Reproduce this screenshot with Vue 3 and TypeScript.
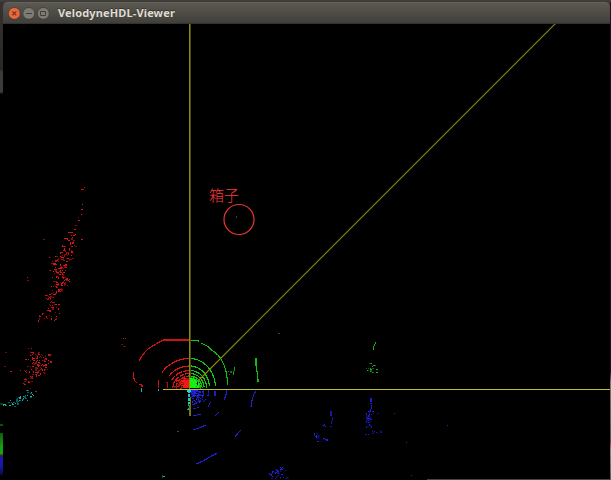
<script setup lang="ts">
interface Stroke { color: string; points: string; dash?: string }
interface Ring { color: string; d: string; dash?: string }
type Band = [y: number, x1: number, x2: number, count: number]
interface Cloud { color: string; dim: string; bands: Band[] }

const CX = 190
const CY = 388

const quarter = (rx: number, ry: number, side: 1 | -1, end: number): string => {
  const pts: string[] = []
  for (let i = 0; i <= 24; i++) {
    const a = (end * i) / 24
    pts.push(`${(CX + side * rx * Math.sin(a)).toFixed(1)},${(CY - ry * Math.cos(a)).toFixed(1)}`)
  }
  return 'M' + pts.join('L')
}

const ring = (rx: number, ry: number, side: 1 | -1, end: number, dash?: string): Ring => ({
  color: side === 1 ? '#10cc10' : '#dc1414', d: quarter(rx, ry, side, end), dash,
})

const rings: Ring[] = [
  ring(33, 29.5, -1, 1.02), ring(25, 22, -1, 1.0), ring(20.5, 17.5, -1, 1.1, '7 1'),
  ring(17, 14.5, -1, 1.25, '5 1'), ring(14, 12, -1, 1.4, '4 1'), ring(12, 10, -1, 1.5, '4 1'),
  ring(25.5, 29.5, 1, 1.5), ring(19.5, 22, 1, 1.5), ring(16.5, 17.5, 1, 1.55),
  ring(14, 14.5, 1, 1.5), ring(12, 12, 1, 1.5), ring(10.5, 10, 1, 1.5),
]

const strokes: Stroke[] = [
  { color: '#c81414', points: '190,340 163,340 156,344 148,349 145,352 142,356 139,361' },
  { color: '#c81414', points: '134,372 133,376 135,381 137,383' },
  { color: '#c81414', points: '139,384 142,385 142,387' },
  { color: '#c81414', points: '158,380 159,384 158,388' },
  { color: '#a81010', points: '167,382 168,388' },
  { color: '#c81414', points: '173,382 174,385 172,388' },
  { color: '#e01414', points: '177,380 176,387', dash: '2 1' },
  { color: '#10d010', points: '190,340 199,341' },
  { color: '#10c010', points: '201,343 207,346 213,351 218,355 221,359 224,365 226,371 227,377 228,385' },
  { color: '#10c010', points: '256,358 256,365 257,371 258,379 258,382' },
  { color: '#10a010', points: '235,367 234,371 233,375' },
  { color: '#0c780c', points: '228,372 230,370 232,373', dash: '2 2' },
  { color: '#0c780c', points: '229,375 231,371', dash: '1 1' },
  { color: '#18b018', points: '376,342 374,346 373,350' },
  { color: '#2020d0', points: '196,464 203,461 210,457 217,453' },
  { color: '#2020d0', points: '193,430 199,428 206,425' },
  { color: '#2020d0', points: '193,416 197,415 201,414' },
  { color: '#2020d0', points: '215,416 217,414 219,412' },
  { color: '#2020d0', points: '235,437 238,433 241,430' },
  { color: '#2020c0', points: '251,407 252,400 254,394 256,391' },
  { color: '#2020c0', points: '224,400 226,395 227,390' },
  { color: '#2020c0', points: '215,391 215,396' },
  { color: '#2020c0', points: '208,407 210,403 211,402' },
  { color: '#2020c0', points: '203,402 206,399' },
  { color: '#2020c0', points: '193,409 199,407', dash: '3 1' },
  { color: '#2020c0', points: '192,405 197,403' },
  { color: '#2020c0', points: '209,390 208,396', dash: '3 1' },
  { color: '#2020c0', points: '204,390 203,396' },
  { color: '#1cc8c8', points: '189,390 189,404', dash: '3 1' },
  { color: '#10a0a0', points: '189,404 188,410', dash: '2 2' },
  { color: '#18b0b0', points: '142,388 141,392' },
  { color: '#18b0b0', points: '158,389 159,391' },
  { color: '#2020c8', points: '371,398 371,404', dash: '4 1' },
  { color: '#2020c8', points: '372,405 371,409 369,415 367,419' },
  { color: '#1818a0', points: '331,411 331,416' },
  { color: '#1818a0', points: '333,417 332,421 331,424' },
]

const clouds: Cloud[] = [
  { color: '#d81414', dim: '#800c0c', bands: [
    [187, 83, 86, 2], [189, 81, 83, 3], [204, 81, 83, 1], [209, 81, 82, 1], [214, 81, 82, 1],
    [217, 78, 79, 1], [220, 78, 79, 2], [225, 75, 77, 2], [229, 60, 76, 2], [232, 64, 76, 3],
    [234, 70, 77, 5], [237, 60, 77, 5], [239, 43, 44, 1], [239, 80, 82, 1], [240, 66, 77, 4],
    [242, 68, 76, 6], [245, 62, 77, 7],
    [248, 62, 71, 5], [250, 61, 77, 7], [252, 60, 75, 8], [254, 61, 73, 8], [256, 47, 75, 8],
    [258, 55, 76, 11], [260, 50, 74, 8], [263, 46, 67, 7], [265, 59, 70, 9], [267, 52, 67, 10],
    [269, 48, 68, 12], [271, 48, 66, 8], [273, 49, 65, 7], [276, 50, 68, 8], [278, 60, 70, 7],
    [280, 50, 70, 7], [282, 55, 67, 9], [284, 53, 68, 10], [286, 50, 62, 6], [288, 56, 64, 6],
    [290, 51, 65, 8], [292, 51, 58, 6], [294, 38, 56, 6], [296, 46, 53, 7], [298, 42, 53, 6],
    [301, 48, 54, 5], [304, 49, 59, 6], [307, 46, 60, 6], [310, 47, 53, 5], [312, 40, 60, 5],
    [315, 38, 57, 6], [318, 38, 58, 7], [320, 38, 56, 4],
    [277, 27, 29, 1], [280, 26, 28, 2],
  ] },
  { color: '#c81818', dim: '#700d0d', bands: [
    [348, 28, 35, 2], [352, 28, 40, 6], [354, 29, 52, 11], [356, 32, 51, 10], [358, 17, 50, 10],
    [360, 29, 52, 11], [362, 29, 50, 11], [364, 31, 46, 12], [366, 27, 48, 11], [368, 25, 50, 11],
    [370, 20, 43, 9], [372, 25, 45, 9], [374, 30, 39, 7], [376, 28, 38, 6], [378, 24, 41, 7],
    [380, 23, 34, 6], [383, 21, 26, 4], [388, 28, 31, 1], [391, 34, 36, 2],
    [352, 5, 7, 1], [366, 4, 5, 1], [371, 10, 11, 1],
    [338, 123, 126, 2], [344, 121, 123, 1], [346, 123, 127, 3],
  ] },
  { color: '#18b0b0', dim: '#0a6060', bands: [
    [390, 26, 29, 3], [392, 25, 34, 5], [394, 19, 34, 6], [396, 15, 31, 7], [398, 14, 27, 9],
    [400, 10, 29, 8], [402, 8, 18, 7], [404, 3, 13, 8], [406, 11, 16, 3],
    [431, 177, 179, 3], [475, 162, 165, 4],
  ] },
  { color: '#18b018', dim: '#0a600a', bands: [
    [333, 277, 279, 1], [363, 369, 373, 3], [365, 370, 378, 4], [368, 366, 377, 6],
    [370, 366, 371, 6], [372, 369, 378, 3], [216, 236, 237, 1], [217, 236, 237, 1],
  ] },
  { color: '#2020e0', dim: '#101070', bands: [
    [411, 368, 373, 5], [413, 366, 374, 7], [415, 366, 370, 9], [417, 365, 373, 9],
    [419, 365, 371, 7], [421, 366, 371, 7], [424, 367, 372, 5], [426, 366, 375, 5],
    [430, 370, 381, 4], [432, 366, 380, 4], [434, 365, 370, 3], [413, 377, 378, 1], [413, 394, 395, 1],
    [424, 322, 327, 5], [426, 321, 333, 3], [433, 314, 319, 5], [435, 314, 319, 8],
    [438, 315, 330, 6], [441, 317, 324, 3], [425, 447, 449, 1], [442, 406, 407, 2], [475, 411, 412, 1],
    [467, 278, 284, 4], [469, 274, 286, 10], [471, 269, 286, 11], [473, 268, 284, 10],
    [475, 271, 279, 7], [477, 271, 290, 8], [478, 273, 295, 6],
  ] },
  { color: '#2626f0', dim: '#1818a0', bands: [
    [390, 190, 200, 14], [391, 190, 203, 14], [393, 190, 201, 14], [395, 191, 203, 13],
    [397, 191, 203, 10], [399, 192, 203, 8], [401, 192, 206, 6],
  ] },
  { color: '#f01818', dim: '#a01010', bands: [
    [378, 182, 189, 6], [380, 180, 186, 6], [382, 178, 184, 7], [384, 176, 184, 8],
    [386, 173, 184, 10], [388, 175, 186, 8],
  ] },
  { color: '#14e814', dim: '#10a010', bands: [
    [377, 191, 197, 6], [380, 194, 200, 6], [383, 196, 201, 6], [386, 196, 203, 7],
  ] },
]

let seed = 7193
const random = (): number => {
  seed = (seed * 48271) % 2147483647
  return seed / 2147483647
}

// Half of the returns gather toward the middle of their band, the rest spread evenly.
const spread = (): number => (random() > 0.5 ? random() : (random() + random()) / 2)

const dots = clouds.flatMap((cloud) =>
  cloud.bands.flatMap(([y, x1, x2, count]) =>
    Array.from({ length: count }, () => ({
      x: Math.floor(x1 + spread() * (x2 - x1)),
      y: y + (count > 3 ? Math.floor(random() * 2) : 0),
      width: random() > 0.7 ? 2 : 1,
      height: random() > 0.85 && count > 3 ? 2 : 1,
      color: random() > 0.45 ? cloud.color : cloud.dim,
    })),
  ),
)
</script>

<template>
  <div class="desktop">
    <div class="behind-left"></div>
    <main class="window">
      <header class="titlebar">
        <svg class="controls" viewBox="0 0 44 14" aria-hidden="true">
          <circle cx="7.3" cy="7.4" r="5.9" fill="#e9683f" stroke="#34322e" stroke-width=".6" />
          <path d="M5.3 5.4l4 4M9.3 5.4l-4 4" stroke="#70301c" stroke-width="1.1" />
          <circle cx="21.8" cy="7.4" r="5.9" fill="#7d7b73" stroke="#34322e" stroke-width=".6" />
          <path d="M19 7.5h6" stroke="#403f3a" />
          <circle cx="36.3" cy="7.4" r="5.9" fill="#7d7b73" stroke="#34322e" stroke-width=".6" />
          <path d="M33.5 5.5h5v4h-5z" fill="none" stroke="#403f3a" />
        </svg>
        <h1>VelodyneHDL-Viewer</h1>
      </header>
      <svg class="scene" viewBox="3 24 607 455" shape-rendering="crispEdges">
        <g class="trace">
          <path v-for="(r, i) in rings" :key="i" :d="r.d" :stroke="r.color" :stroke-dasharray="r.dash" />
        </g>
        <path d="M183 388l-1-4 2-4 3-2h3v10z" fill="#f51818" />
        <path d="M190 388v-10l4 1 3 3 1 6z" fill="#14f014" />
        <path d="M190 390h7l-2 5-2 2-3-5z" fill="#2222e0" />
        <g class="trace">
          <polyline
            v-for="(s, i) in strokes" :key="i" :points="s.points"
            :stroke="s.color" :stroke-dasharray="s.dash"
          />
        </g>
        <rect
          v-for="(d, i) in dots" :key="i" :x="d.x" :y="d.y"
          :width="d.width" :height="d.height" :fill="d.color"
        />
        <path d="M189.5 24v366" stroke="#8c8c10" />
        <path d="M190.5 24v354" stroke="#4c4a08" />
        <path d="M189.5 405v11M190.5 397v19" stroke="#77751a" />
        <path d="M198 381L555.5 23.5" stroke="#8e8e10" stroke-width="1.1" shape-rendering="auto" />
        <path d="M163 389.5h447" stroke="#c0c028" />
        <path d="M187 390h4v2h-4z" fill="#20d8e0" />
        <circle cx="239" cy="219.5" r="15" fill="none" stroke="#ee3434" stroke-width="1.2" shape-rendering="auto" />
        <text class="label" x="209" y="201">箱子</text>
      </svg>
    </main>
    <div class="behind-right"></div>
  </div>
</template>

<style>
body { margin: 0; background: #000; overflow: hidden; }
</style>

<style scoped>
.desktop {
  box-sizing: border-box;
  width: 611px;
  height: 480px;
  display: grid;
  grid-template-columns: 3px 607px 1px;
  padding-top: 2px;
  background: linear-gradient(90deg, #000 427px, #454345 427px) 0 479px / 100% 1px no-repeat,
    linear-gradient(#403f3b, #35342f) 0 0 / 100% 5px no-repeat, #000;
}
.behind-left {
  background: linear-gradient(transparent 401px, #073f07 401px 403px, transparent 403px 422px,
    #0a500a 422px 424px, transparent 424px 431px, #0a600a 431px, #16a016 445px 452px,
    #502808 453px, #1818a8 455px 464px, #080850 472px, transparent 474px),
    linear-gradient(#34332f, #292825 68px, #3c3b37 69px 90px, #000 92px);
}
.window {
  display: flex;
  flex-direction: column;
  min-width: 0;
  height: 477px;
}
.titlebar {
  box-sizing: border-box;
  height: 22px;
  display: flex;
  align-items: center;
  padding-left: 4px;
  gap: 7px;
  border-radius: 5px 5px 0 0;
  border-top: 1px solid #65635b;
  border-bottom: 1px solid #33322e;
  background: linear-gradient(#5b5950, #403f3a);
}
.controls { width: 44px; height: 14px; flex: none; }
h1 {
  margin: 0;
  font: 700 11px/20px "Noto Sans", "Open Sans", sans-serif;
  letter-spacing: 0.14px;
  color: #dfdbd2;
  text-shadow: 0 -1px #33322e;
  white-space: nowrap;
}
.scene { display: block; width: 607px; height: 455px; background: #000; }
.trace { fill: none; stroke-width: 1.15px; }
.label { font: 300 15px "Noto Sans CJK SC", sans-serif; fill: #ff3a3a; }
.behind-right {
  background: linear-gradient(#290b25 370px, #777 380px, #555 440px, #a06040 444px 445px, #888 446px, #606060);
}
</style>
